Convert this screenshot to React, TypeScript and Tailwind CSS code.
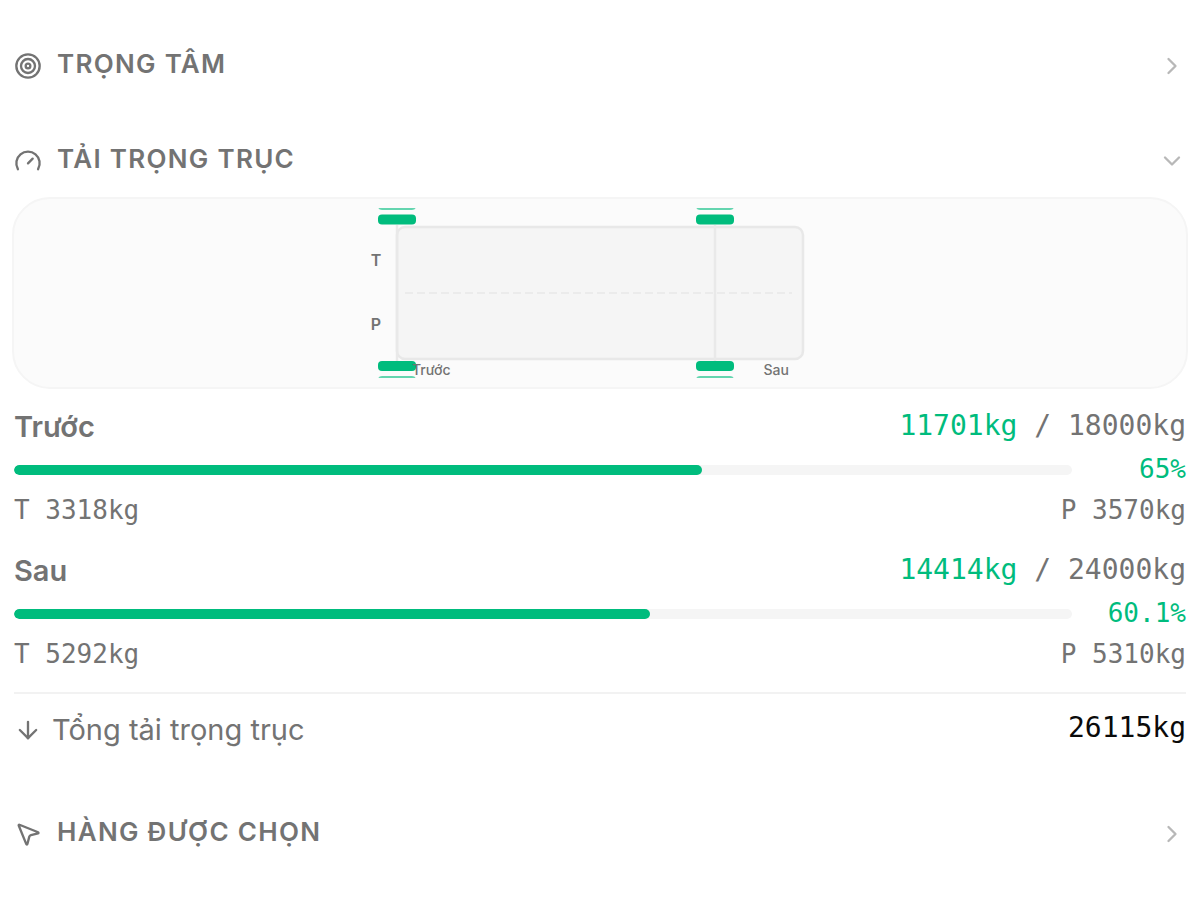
/**
 * Load panel: collapsible sections with the axle load readout.
 */
import { useState } from "react";
import type { ReactNode } from "react";
import { ArrowDown, ChevronDown, ChevronRight, Gauge, MousePointer2, Target } from "lucide-react";
import type { LucideIcon } from "lucide-react";

interface AxleLoad {
  name: string;
  load: number;
  max: number;
  percent: number;
  left: number;
  right: number;
}

const AXLES: AxleLoad[] = [
  { name: "Trước", load: 11701, max: 18000, percent: 65, left: 3318, right: 3570 },
  { name: "Sau", load: 14414, max: 24000, percent: 60.1, left: 5292, right: 5310 },
];

const AXLE_X = [37, 355];

interface SectionProps {
  title: string;
  icon: LucideIcon;
  defaultOpen?: boolean;
  children?: ReactNode;
}

function Section({ title, icon: Icon, defaultOpen = false, children }: SectionProps) {
  const [open, setOpen] = useState(defaultOpen);
  const Chevron = open ? ChevronDown : ChevronRight;

  return (
    <section>
      <h2>
        <button
          type="button"
          aria-expanded={open}
          onClick={() => setOpen(!open)}
          className="flex h-10 w-full items-center gap-[15px] text-left"
        >
          <Icon className="size-7 shrink-0" />
          <span className="flex-1 pb-1 text-[26px] leading-9 font-semibold tracking-wider uppercase">
            {title}
          </span>
          <Chevron className="size-7 shrink-0 text-[#b8b8b8]" />
        </button>
      </h2>
      {open && children}
    </section>
  );
}

// Top view of the trailer, wheels on both sides of each axle
function AxleDiagram() {
  return (
    <div className="-mx-0.5 mt-4 flex justify-center rounded-[38px] border-2 border-[#f5f5f5] bg-[#fbfbfb] py-[9px]">
      <svg viewBox="0 0 480 170" className="w-[480px] max-w-full" role="img" aria-label="Tải trọng trục">
        <rect x="37" y="19" width="406" height="132" rx="8" fill="#f5f5f5" stroke="#e8e8e8" strokeWidth="2.5" />
        <line x1="45" y1="85" x2="432" y2="85" stroke="#ebebeb" strokeWidth="2" strokeDasharray="8 4" />
        {AXLE_X.map((x) => (
          <g key={x}>
            <line x1={x} y1="17" x2={x} y2="153" stroke="#e9e9e9" strokeWidth="2.5" />
            <rect x={x - 19} y="-8" width="38" height="10" rx="4" fill="#00bc7d" opacity="0.6" />
            <rect x={x - 19} y="6.5" width="38" height="10" rx="4" fill="#00bc7d" />
            <rect x={x - 19} y="153" width="38" height="10" rx="4" fill="#00bc7d" />
            <rect x={x - 19} y="168" width="38" height="10" rx="4" fill="#00bc7d" opacity="0.6" />
          </g>
        ))}
        <g fill="#737373" fontSize="16" fontWeight="600" textAnchor="middle">
          <text x="16" y="58">T</text>
          <text x="16" y="122">P</text>
        </g>
        <g fill="#737373" fontSize="14" fontWeight="500">
          <text x="52" y="167">Trước</text>
          <text x="429" y="167" textAnchor="end">Sau</text>
        </g>
      </svg>
    </div>
  );
}

function AxleRow({ axle }: { axle: AxleLoad }) {
  return (
    <div>
      <div className="flex h-9 items-center justify-between">
        <h3 className="pb-0.5 text-[29px] leading-9 font-semibold">{axle.name}</h3>
        <p className="pb-1 font-['DejaVu_Sans_Mono',monospace] text-[28px] leading-9 whitespace-pre">
          <span className="text-[#00bc7d]">{axle.load}kg</span>
          {" / "}
          {axle.max}kg
        </p>
      </div>
      <div className="mt-2 flex h-8 items-center gap-3.5">
        <div className="h-2.5 flex-1 overflow-hidden rounded-full bg-[#f5f5f5]">
          <div className="h-full rounded-full bg-[#00bc7d]" style={{ width: `${axle.percent}%` }} />
        </div>
        <span className="w-[100px] pb-0.5 text-right font-['DejaVu_Sans_Mono',monospace] text-[26px] leading-8 text-[#00bc7d]">
          {axle.percent}%
        </span>
      </div>
      <div className="mt-2 flex justify-between font-['DejaVu_Sans_Mono',monospace] text-[26px] leading-8">
        <span>T {axle.left}kg</span>
        <span>P {axle.right}kg</span>
      </div>
    </div>
  );
}

export default function App() {
  const total = AXLES.reduce((sum, axle) => sum + axle.load, 0);

  return (
    <main className="min-h-screen bg-white px-3.5 pt-[46px] pb-11 font-['Inter',sans-serif] text-[#737373]">
      <Section title="Trọng tâm" icon={Target} />

      <div className="mt-[55px]">
        <Section title="Tải trọng trục" icon={Gauge} defaultOpen>
          <AxleDiagram />
          <div className="mt-[21px] flex flex-col gap-7">
            {AXLES.map((axle) => (
              <AxleRow key={axle.name} axle={axle} />
            ))}
          </div>
          <div className="mt-[22px] flex items-center border-t-2 border-[#f2f2f2] pt-[18px]">
            <ArrowDown className="size-7 shrink-0" />
            <span className="ml-2.5 flex-1 text-[29px] leading-9">Tổng tải trọng trục</span>
            <span className="pb-1 font-['DejaVu_Sans_Mono',monospace] text-[28px] leading-8 text-[#0a0a0a]">
              {total}kg
            </span>
          </div>
        </Section>
      </div>

      <div className="mt-[66px]">
        <Section title="Hàng được chọn" icon={MousePointer2} />
      </div>
    </main>
  );
}
